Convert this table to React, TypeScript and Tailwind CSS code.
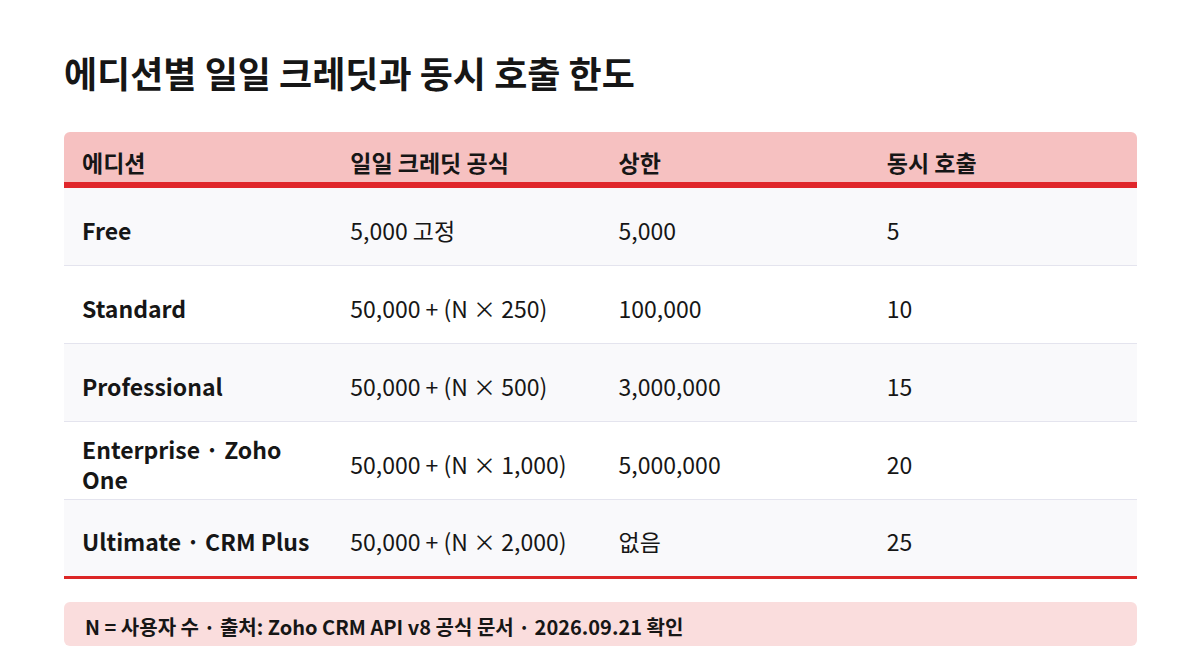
const rows = [
  { name: "Free", formula: "5,000 고정", cap: "5,000", calls: "5" },
  { name: "Standard", formula: "50,000 + (N × 250)", cap: "100,000", calls: "10" },
  { name: "Professional", formula: "50,000 + (N × 500)", cap: "3,000,000", calls: "15" },
  { name: "Enterprise · Zoho One", formula: "50,000 + (N × 1,000)", cap: "5,000,000", calls: "20" },
  { name: "Ultimate · CRM Plus", formula: "50,000 + (N × 2,000)", cap: "없음", calls: "25" },
];

export default function App() {
  return (
    <div
      className="min-h-screen w-[1200px] bg-white pl-[64px] pr-[63px] pt-[47px] text-[#161616]"
      style={{ fontFamily: '"Noto Sans CJK KR", "Noto Sans", sans-serif' }}
    >
      <h1 className="text-[36px] font-bold leading-[50px]">에디션별 일일 크레딧과 동시 호출 한도</h1>

      <div className="mt-[35px] overflow-hidden rounded-t-[6px]">
        <div className="grid h-[50px] grid-cols-4 items-center bg-[#f6c1c1] pt-[10px] text-[23px] font-bold leading-[30px]">
          <div className="px-[18px]">에디션</div>
          <div className="px-[18px]">일일 크레딧 공식</div>
          <div className="px-[18px]">상한</div>
          <div className="px-[18px]">동시 호출</div>
        </div>
        <div className="h-[6px] bg-[#e0262b]" />
        {rows.map((r, i) => (
          <div
            key={r.name}
            className={
              "grid grid-cols-4 items-center pt-[6px] text-[23px] leading-[30px] " +
              (i % 2 === 0 ? "bg-[#f9f9fb] " : "bg-white ") +
              (i === rows.length - 1 ? "h-[79px] border-b-[3px] border-[#dc2626]" : "h-[78px] border-b border-[#e4e4ee]")
            }
          >
            <div className="px-[18px] font-bold">{r.name}</div>
            <div className="px-[18px]">{r.formula}</div>
            <div className="px-[18px]">{r.cap}</div>
            <div className="px-[18px]">{r.calls}</div>
          </div>
        ))}
      </div>

      <div className="mt-[23px] flex h-[44px] items-center rounded-[6px] bg-[#fadddd] pl-[21px] pt-[6px] text-[20px] font-bold">
        N = 사용자 수 · 출처: Zoho CRM API v8 공식 문서 · 2026.09.21 확인
      </div>
    </div>
  );
}
